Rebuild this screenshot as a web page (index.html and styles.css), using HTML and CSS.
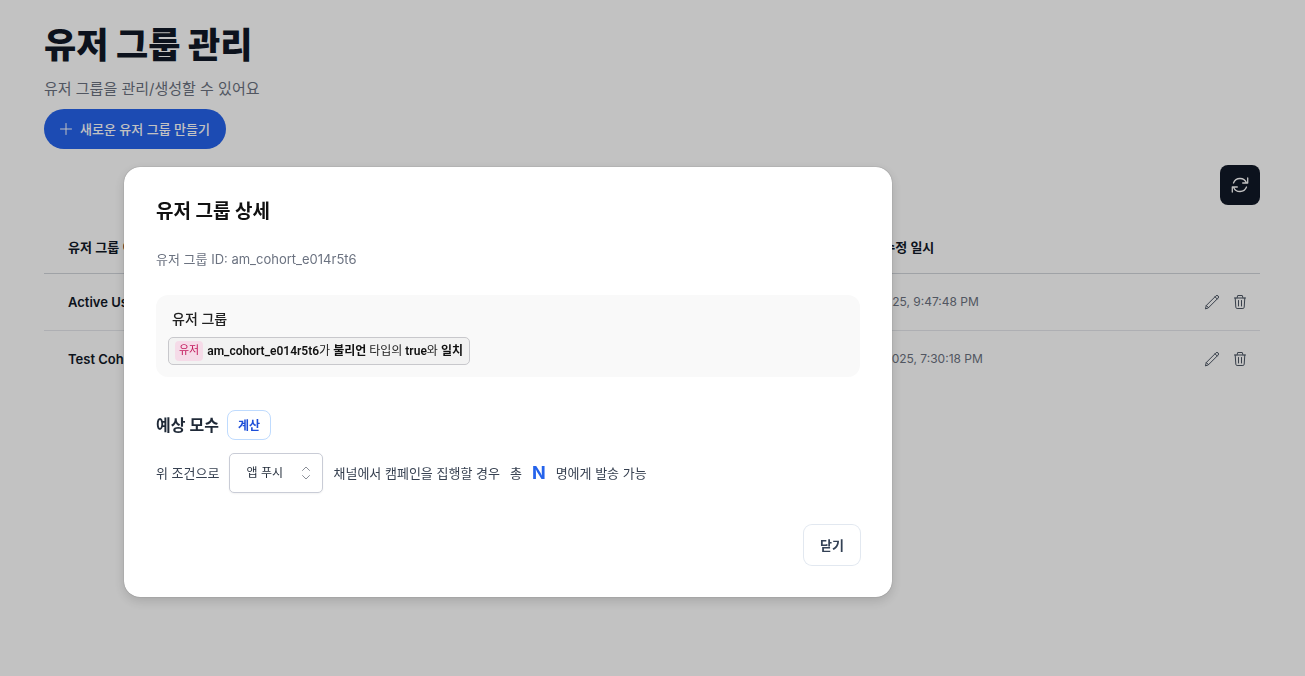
FILE: index.html
```html
<!DOCTYPE html>
<html lang="ko">
<head>
    <meta charset="UTF-8">
    <meta name="viewport" content="width=device-width, initial-scale=1.0">
    <title>유저 그룹 관리</title>
    <link rel="stylesheet" href="styles.css">
</head>
<body>
    <svg class="sprite" aria-hidden="true">
        <symbol id="icon-pencil" viewBox="0 0 16 16">
            <path d="M1.500 14.500l.8-3L11.900 1.900a1.500 1.500 0 0 1 2.200 2.200l-9.600 9.600zM11 2.800l2.200 2.200M2.300 11.500l2.200 2.200"/>
        </symbol>
        <symbol id="icon-trash" viewBox="0 0 16 16">
            <path d="M2.500 4h11M5 4l.7-2.500h4.600L11 4M3.200 4l.6 9.200c.1.8.5 1.300 1.300 1.300h5.800c.8 0 1.200-.5 1.300-1.300L12.800 4M6.500 6.500v5.500M9.500 6.500v5.500"/>
        </symbol>
    </svg>

    <main class="page">
        <h1>유저 그룹 관리</h1>
        <p class="subtitle">유저 그룹을 관리/생성할 수 있어요</p>
        <button class="btn-create" type="button">
            <svg width="12" height="12" viewBox="0 0 12 12"><path d="M6 .5v11M.5 6h11"/></svg>
            <span>새로운 유저 그룹 만들기</span>
        </button>

        <div class="toolbar">
            <button class="btn-refresh" type="button" aria-label="새로고침">
                <svg width="20" height="20" viewBox="0 0 20 20"><path d="M3.500 8a7 7 0 0 1 13-.2M17.700 3v5h-5M16.500 12a7 7 0 0 1-13 .2M2.300 17v-5h5"/></svg>
            </button>
        </div>

        <table class="group-table">
            <thead>
                <tr>
                    <th>유저 그룹 이름</th>
                    <th class="col-date">최근 수정 일시</th>
                    <th class="col-actions"></th>
                </tr>
            </thead>
            <tbody>
                <tr>
                    <td class="name">Active Users</td>
                    <td class="date">4/1/2025, 9:47:48 PM</td>
                    <td>
                        <div class="actions">
                            <button type="button" aria-label="수정"><svg width="16" height="16"><use href="#icon-pencil"/></svg></button>
                            <button type="button" aria-label="삭제"><svg width="16" height="16"><use href="#icon-trash"/></svg></button>
                        </div>
                    </td>
                </tr>
                <tr>
                    <td class="name">Test Cohort</td>
                    <td class="date">3/31/2025, 7:30:18 PM</td>
                    <td>
                        <div class="actions">
                            <button type="button" aria-label="수정"><svg width="16" height="16"><use href="#icon-pencil"/></svg></button>
                            <button type="button" aria-label="삭제"><svg width="16" height="16"><use href="#icon-trash"/></svg></button>
                        </div>
                    </td>
                </tr>
            </tbody>
        </table>
    </main>

    <div class="overlay">
        <section class="modal" role="dialog" aria-modal="true" aria-labelledby="modalTitle">
            <h2 id="modalTitle">유저 그룹 상세</h2>
            <p class="group-id">유저 그룹 ID: am_cohort_e014r5t6</p>

            <div class="condition-box">
                <h3>유저 그룹</h3>
                <div class="condition">
                    <span class="tag">유저</span>
                    <span><b>am_cohort_e014r5t6</b>가 <b>불리언</b> 타입의 <b>true</b>와 <b>일치</b></span>
                </div>
            </div>

            <div class="estimate-header">
                <h3>예상 모수</h3>
                <button class="btn-calc" type="button">계산</button>
            </div>
            <div class="estimate-row">
                <label for="channel">위 조건으로</label>
                <div class="select-wrap">
                    <select id="channel">
                        <option>앱 푸시</option>
                    </select>
                    <svg class="select-icon" width="10" height="16" viewBox="0 0 10 16"><path d="M1.500 5.500L5 2l3.500 3.500M1.500 10.500L5 14l3.500-3.500"/></svg>
                </div>
                <span>채널에서 캠페인을 집행할 경우</span>
                <span>총</span>
                <strong class="count">N</strong>
                <span>명에게 발송 가능</span>
            </div>

            <div class="modal-footer">
                <button class="btn-close" type="button">닫기</button>
            </div>
        </section>
    </div>
</body>
</html>
```
FILE: styles.css
```css
* {
    margin: 0;
    padding: 0;
    box-sizing: border-box;
}

body {
    font-family: Inter, "Noto Sans CJK KR", sans-serif;
    font-size: 13px;
    line-height: 20px;
    color: #111827;
    background: #fff;
}

button,
select {
    font-family: inherit;
    font-size: 13px;
    cursor: pointer;
}

svg {
    display: block;
    fill: none;
    stroke: currentColor;
    stroke-linecap: round;
    stroke-linejoin: round;
}

.sprite {
    display: none;
}

.page {
    padding: 24px 45px 24px 44px;
}

h1 {
    font-size: 35px;
    line-height: 42px;
    font-weight: 800;
}

.subtitle {
    margin-top: 11px;
    font-size: 15px;
    line-height: 24px;
    color: #6b7280;
}

.btn-create {
    display: flex;
    align-items: center;
    gap: 8px;
    height: 40px;
    margin-top: 8px;
    padding: 0 16px;
    border: none;
    border-radius: 20px;
    background: #2563eb;
    color: #fff;
    font-weight: 500;
}

.btn-create span {
    padding-bottom: 2px;
}

.toolbar {
    display: flex;
    justify-content: flex-end;
    margin-top: 16px;
}

.btn-refresh {
    display: flex;
    align-items: center;
    justify-content: center;
    width: 40px;
    height: 40px;
    border: none;
    border-radius: 8px;
    background: #111827;
    color: #fff;
}

.btn-refresh svg {
    stroke-width: 1.3;
}

.group-table {
    width: 100%;
    margin-top: 16px;
    border-collapse: collapse;
    table-layout: fixed;
}

.group-table th {
    height: 52px;
    padding: 0 24px;
    text-align: left;
    font-weight: 600;
    border-bottom: 1px solid #d1d5db;
}

.group-table td {
    height: 57px;
    padding: 0 24px;
}

.group-table tbody tr + tr td {
    border-top: 1px solid #e5e7eb;
}

.group-table .col-date {
    width: 308px;
}

.group-table .col-actions {
    width: 120px;
}

.group-table .name {
    font-weight: 600;
}

.group-table .date {
    font-size: 12px;
    color: #6b7280;
}

.group-table td:last-child {
    padding-right: 12px;
}

.actions {
    display: flex;
    justify-content: flex-end;
    gap: 12px;
}

.actions button {
    border: none;
    background: none;
    color: #4b5563;
}

/* modal */

.overlay {
    position: fixed;
    inset: 0;
    padding: 167px 124px 24px;
    background: rgba(0, 0, 0, 0.24);
    overflow: auto;
}

.modal {
    max-width: 768px;
    padding: 32px;
    border-radius: 16px;
    background: #fff;
    box-shadow: 0 0 1px rgba(0, 0, 0, 0.5), 0 4px 12px rgba(0, 0, 0, 0.15);
}

.modal h2 {
    font-size: 19px;
    line-height: 26px;
    font-weight: 700;
    color: #111;
}

.group-id {
    margin-top: 24px;
    color: #6b7280;
}

.condition-box {
    margin-top: 26px;
    padding: 12px;
    border-radius: 12px;
    background: #f9f9f9;
}

.condition-box h3 {
    padding-left: 4px;
    font-size: 14px;
    line-height: 24px;
    font-weight: 500;
    color: #222;
}

.condition {
    display: inline-flex;
    align-items: center;
    gap: 4px;
    height: 28px;
    margin-top: 6px;
    padding: 0 6px;
    border: 1px solid #c8c8cc;
    border-radius: 5px;
    background: #f2f2f2;
    font-family: Roboto, "Noto Sans CJK KR", sans-serif;
    font-size: 12px;
    color: #222;
    vertical-align: top;
}

.condition b {
    font-weight: 600;
    color: #111;
}

.tag {
    padding: 0 4px;
    border-radius: 4px;
    background: #f5dbe8;
    font-size: 11px;
    color: #c2185b;
}

.estimate-header {
    display: flex;
    align-items: center;
    gap: 8px;
    margin-top: 33px;
}

.estimate-header h3 {
    font-size: 16px;
    line-height: 24px;
    font-weight: 600;
    color: #1f2937;
}

.btn-calc {
    height: 30px;
    padding: 0 10px 2px;
    border: 1px solid #bfdbfe;
    border-radius: 8px;
    background: #fff;
    color: #1d4ed8;
    font-size: 12px;
    font-weight: 600;
}

.estimate-row {
    display: flex;
    flex-wrap: wrap;
    align-items: center;
    gap: 10px;
    margin-top: 13px;
    color: #374151;
}

.select-wrap {
    position: relative;
}

.select-wrap select {
    appearance: none;
    width: 94px;
    height: 40px;
    padding: 0 30px 2px 16px;
    border: 1px solid #c9ccd6;
    border-radius: 5px;
    background: #fff;
    color: #1f2937;
    font-size: 12px;
    box-shadow: 0 1px 2px rgba(0, 0, 0, 0.05);
}

.select-icon {
    position: absolute;
    top: 12px;
    right: 12px;
    color: #8b8f98;
    pointer-events: none;
}

.count {
    font-size: 18px;
    font-weight: 700;
    color: #2563eb;
}

.modal-footer {
    display: flex;
    justify-content: flex-end;
    margin-top: 32px;
}

.btn-close {
    height: 40px;
    padding: 0 16px 2px;
    border: none;
    border-radius: 8px;
    background: #fff;
    box-shadow: 0 0 0 1px #e2e8f0;
    color: #334155;
    font-weight: 600;
}
```
